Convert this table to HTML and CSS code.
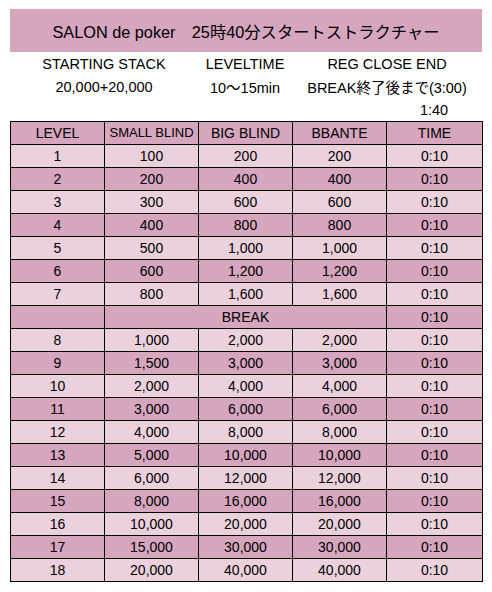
FILE: index.html
```html
<!DOCTYPE html>
<html lang="ja">
<head>
<meta charset="utf-8">
<title>SALON de poker ストラクチャー</title>
<link rel="stylesheet" href="styles.css">
</head>
<body>
<div class="page">
  <div class="title">SALON de poker　25時40分スタートストラクチャー</div>
  <div class="info">
    <div class="info-cell span2">STARTING STACK</div>
    <div class="info-cell">LEVELTIME</div>
    <div class="info-cell span2">REG CLOSE END</div>
    <div class="info-cell span2">20,000+20,000</div>
    <div class="info-cell">10～15min</div>
    <div class="info-cell span2">BREAK終了後まで(3:00)</div>
    <div class="info-cell last">1:40</div>
  </div>
  <table class="structure">
    <colgroup>
      <col class="c"><col class="c"><col class="c"><col class="c"><col class="c5">
    </colgroup>
    <thead>
      <tr class="dark"><th>LEVEL</th><th class="small">SMALL BLIND</th><th>BIG BLIND</th><th>BBANTE</th><th>TIME</th></tr>
    </thead>
    <tbody>
      <tr class="light"><td>1</td><td>100</td><td>200</td><td>200</td><td>0:10</td></tr>
      <tr class="dark"><td>2</td><td>200</td><td>400</td><td>400</td><td>0:10</td></tr>
      <tr class="light"><td>3</td><td>300</td><td>600</td><td>600</td><td>0:10</td></tr>
      <tr class="dark"><td>4</td><td>400</td><td>800</td><td>800</td><td>0:10</td></tr>
      <tr class="light"><td>5</td><td>500</td><td>1,000</td><td>1,000</td><td>0:10</td></tr>
      <tr class="dark"><td>6</td><td>600</td><td>1,200</td><td>1,200</td><td>0:10</td></tr>
      <tr class="light"><td>7</td><td>800</td><td>1,600</td><td>1,600</td><td>0:10</td></tr>
      <tr class="dark"><td></td><td colspan="3">BREAK</td><td>0:10</td></tr>
      <tr class="light"><td>8</td><td>1,000</td><td>2,000</td><td>2,000</td><td>0:10</td></tr>
      <tr class="dark"><td>9</td><td>1,500</td><td>3,000</td><td>3,000</td><td>0:10</td></tr>
      <tr class="light"><td>10</td><td>2,000</td><td>4,000</td><td>4,000</td><td>0:10</td></tr>
      <tr class="dark"><td>11</td><td>3,000</td><td>6,000</td><td>6,000</td><td>0:10</td></tr>
      <tr class="light"><td>12</td><td>4,000</td><td>8,000</td><td>8,000</td><td>0:10</td></tr>
      <tr class="dark"><td>13</td><td>5,000</td><td>10,000</td><td>10,000</td><td>0:10</td></tr>
      <tr class="light"><td>14</td><td>6,000</td><td>12,000</td><td>12,000</td><td>0:10</td></tr>
      <tr class="dark"><td>15</td><td>8,000</td><td>16,000</td><td>16,000</td><td>0:10</td></tr>
      <tr class="light"><td>16</td><td>10,000</td><td>20,000</td><td>20,000</td><td>0:10</td></tr>
      <tr class="dark"><td>17</td><td>15,000</td><td>30,000</td><td>30,000</td><td>0:10</td></tr>
      <tr class="light"><td>18</td><td>20,000</td><td>40,000</td><td>40,000</td><td>0:10</td></tr>
    </tbody>
  </table>
</div>
</body>
</html>
```

FILE: styles.css
```css
html, body {
  margin: 0;
  padding: 0;
  background: #ffffff;
}

body {
  font-family: "Liberation Sans", Arial, "Noto Sans CJK JP", sans-serif;
  color: #000000;
}

.page {
  padding: 9px 10px 0 10px;
  width: 472px;
}

.title {
  height: 43px;
  background: #d5a6bd;
  font-size: 16.3px;
  display: flex;
  align-items: center;
  justify-content: center;
  white-space: nowrap;
}

.info {
  display: grid;
  grid-template-columns: 94px 94px 94px 94px 96px;
  grid-auto-rows: 23px;
  font-size: 14.5px;
}

.info-cell {
  display: flex;
  align-items: center;
  justify-content: center;
  white-space: nowrap;
}

.info-cell.span2 {
  grid-column: span 2;
}

.info-cell.last {
  grid-column: 5;
}

.structure {
  border-collapse: collapse;
  table-layout: fixed;
  width: 472px;
  font-size: 14px;
}

.structure col.c {
  width: 94px;
}

.structure col.c5 {
  width: 96px;
}

.structure th,
.structure td {
  border: 1px solid #000000;
  height: 22px;
  padding: 0;
  text-align: center;
  vertical-align: middle;
  font-weight: normal;
  white-space: nowrap;
  line-height: 16px;
}

.structure th.small {
  font-size: 13px;
}

.dark {
  background: #d5a6bd;
}

.light {
  background: #ead1dc;
}
```
